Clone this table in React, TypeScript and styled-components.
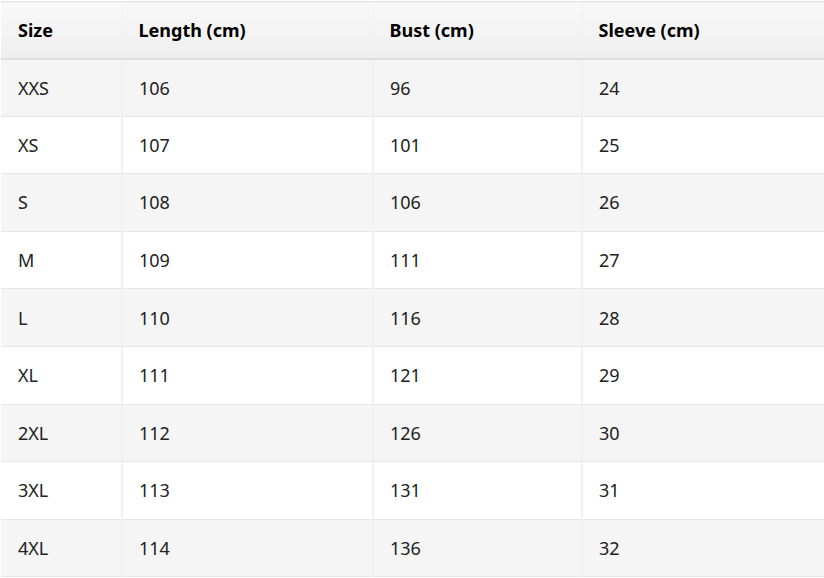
import React from "react";
import styled, { createGlobalStyle } from "styled-components";

const GlobalStyle = createGlobalStyle`
  html, body {
    margin: 0;
    padding: 0;
    background: #fff;
  }
  body {
    font-family: "Noto Sans", "Open Sans", sans-serif;
  }
`;

const Wrapper = styled.div`
  padding: 1px 0 0 1px;
`;

const Table = styled.table`
  width: 823px;
  border-collapse: collapse;
  table-layout: fixed;
  font-size: 18px;
  color: #222;
`;

const HeadCell = styled.th<{ $w: number }>`
  width: ${(p) => p.$w}px;
  height: 57px;
  box-sizing: border-box;
  padding: 0 16px;
  text-align: left;
  font-weight: 700;
  color: #000;
  background: linear-gradient(#f9f9f9, #eeeeee);
  border-top: 1px solid #e3e3e3;
  border-bottom: 2px solid #dedede;
  border-left: 1px solid #f0f0f0;
  &:first-child {
    border-left: none;
    padding-left: 17px;
  }
`;

const Row = styled.tr<{ $alt: boolean }>`
  background: ${(p) => (p.$alt ? "#f5f5f5" : "#ffffff")};
  border-bottom: 1px solid #e6e6e6;
`;

const Cell = styled.td`
  height: 57.6px;
  box-sizing: border-box;
  padding: 0 16px;
  font-weight: 400;
  border-left: 2px solid #f0f0f0;
  &:first-child {
    border-left: none;
    padding-left: 17px;
  }
`;

const columns = [
  { label: "Size", w: 121 },
  { label: "Length (cm)", w: 251 },
  { label: "Bust (cm)", w: 209 },
  { label: "Sleeve (cm)", w: 242 },
];

const rows = [
  ["XXS", 106, 96, 24],
  ["XS", 107, 101, 25],
  ["S", 108, 106, 26],
  ["M", 109, 111, 27],
  ["L", 110, 116, 28],
  ["XL", 111, 121, 29],
  ["2XL", 112, 126, 30],
  ["3XL", 113, 131, 31],
  ["4XL", 114, 136, 32],
];

export default function App() {
  return (
    <>
      <GlobalStyle />
      <Wrapper>
        <Table>
          <thead>
            <tr>
              {columns.map((c) => (
                <HeadCell key={c.label} $w={c.w}>
                  {c.label}
                </HeadCell>
              ))}
            </tr>
          </thead>
          <tbody>
            {rows.map((r, i) => (
              <Row key={r[0]} $alt={i % 2 === 0}>
                {r.map((v, j) => (
                  <Cell key={j}>{v}</Cell>
                ))}
              </Row>
            ))}
          </tbody>
        </Table>
      </Wrapper>
    </>
  );
}
